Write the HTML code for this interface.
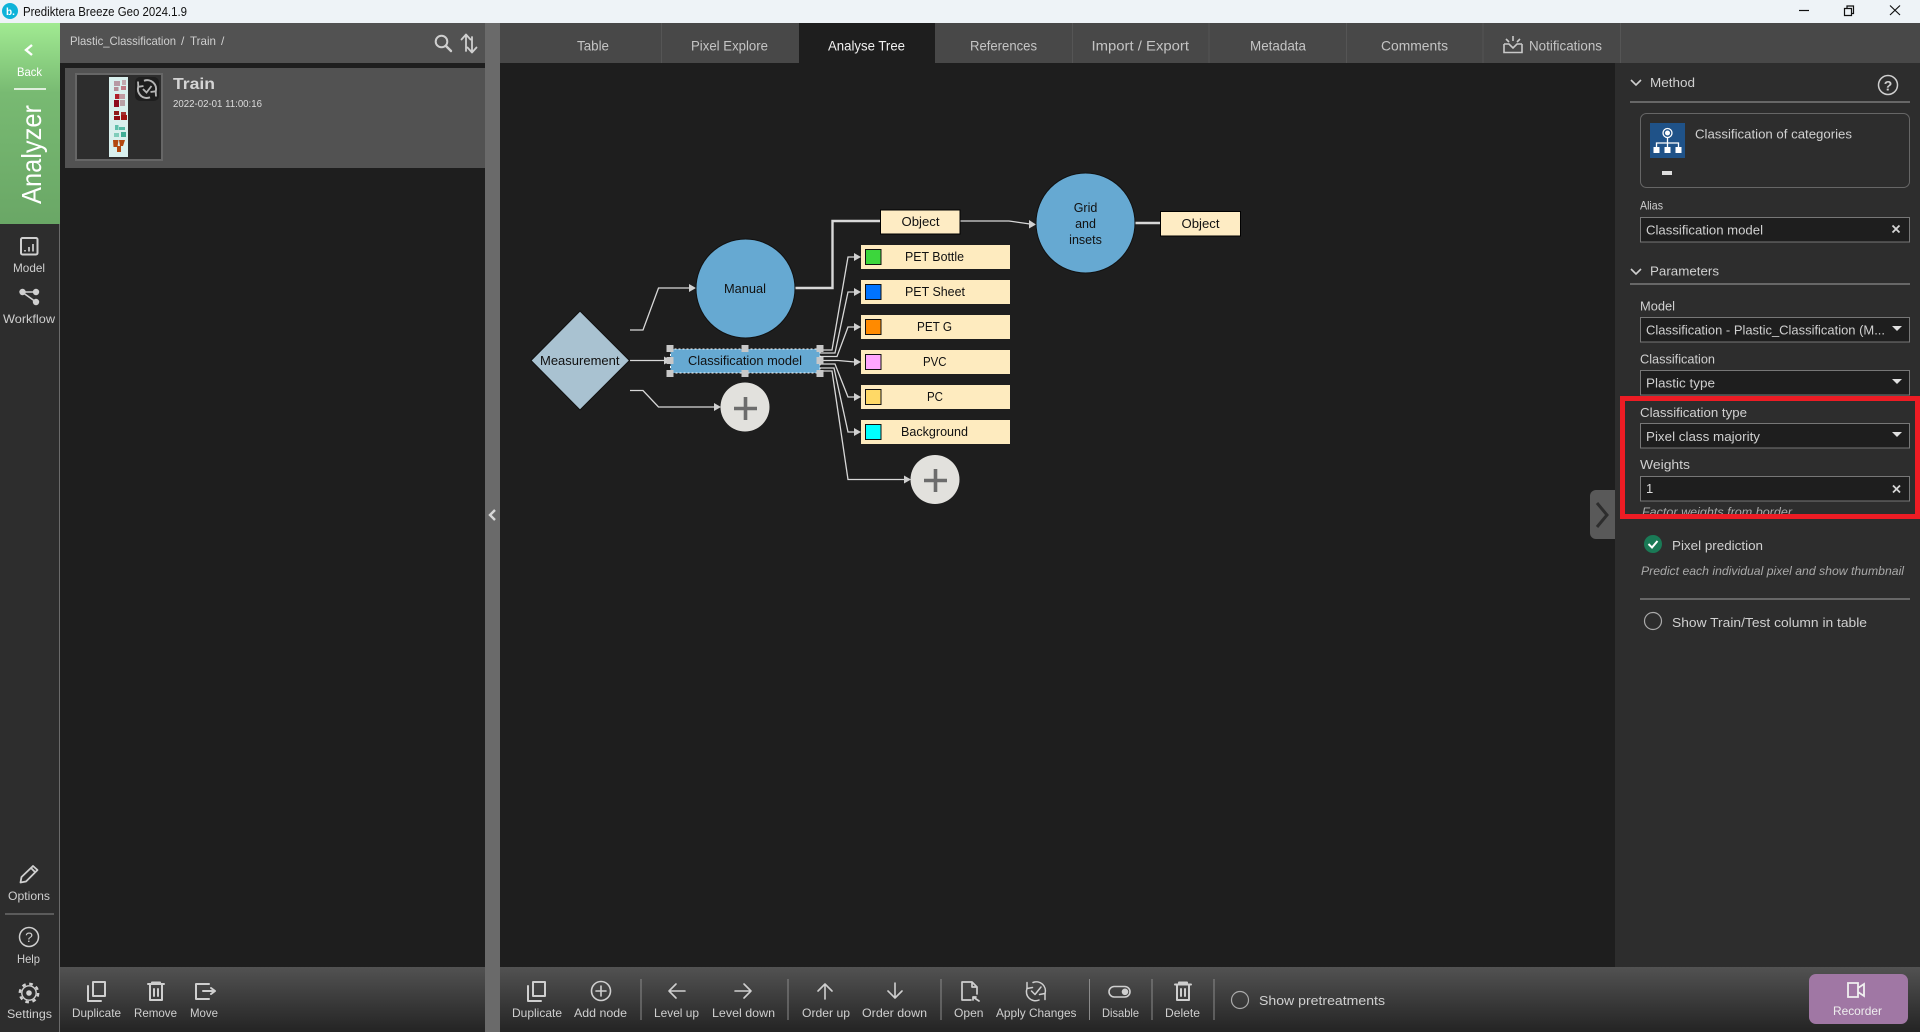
<!DOCTYPE html>
<html lang="en">
<head>
<meta charset="utf-8">
<title>Prediktera Breeze Geo 2024.1.9</title>
<style>
html,body{margin:0;padding:0;width:1920px;height:1032px;overflow:hidden;background:#1e1e1e}
.p{position:absolute}
svg{position:absolute;left:0;top:0}
text{font-family:"Liberation Sans",sans-serif;font-size:12px;fill:#cfcfcf}
.w{font-size:13px;fill:#d0d0d0}
.tab{font-size:14px;fill:#c4c4c4}
.n{font-size:12.5px;fill:#111}
.i{fill:none;stroke:#cfcfcf;stroke-width:2;stroke-linejoin:round;stroke-linecap:round}
.e{fill:none;stroke:#d8d8d8;stroke-width:1.3}
.a{fill:#d0d0d0;stroke:none}
</style>
</head>
<body>
<div class="p" style="left:0;top:0;width:1920px;height:23px;background:#eef3f7"></div>
<div class="p" style="left:0;top:23px;width:59px;height:1009px;background:#2d2d2d;border-right:1px solid #6a6a6a"></div>
<div class="p" style="left:0;top:23px;width:60px;height:201px;background:linear-gradient(#a1ea92,#78ba72 35%,#6aa766)"></div>
<div class="p" style="left:60px;top:23px;width:425px;height:40px;background:#525252"></div>
<div class="p" style="left:65px;top:68px;width:420px;height:100px;background:#525252"></div>
<div class="p" style="left:75px;top:73px;width:84px;height:84px;border:2px solid #666;background:#2d2d2d"></div>
<div class="p" style="left:485px;top:23px;width:15px;height:1009px;background:#6a6a6a"></div>
<div class="p" style="left:500px;top:23px;width:1420px;height:40px;background:#484848"></div>
<div class="p" style="left:799px;top:23px;width:136px;height:40px;background:#1e1e1e"></div>
<div class="p" style="left:1615px;top:63px;width:305px;height:904px;background:#2d2d2d"></div>
<div class="p" style="left:60px;top:967px;width:425px;height:65px;background:linear-gradient(#525252,#242424)"></div>
<div class="p" style="left:500px;top:967px;width:1420px;height:65px;background:linear-gradient(#525252,#242424)"></div>
<div class="p" style="left:1809px;top:974px;width:99px;height:50px;border-radius:7px;background:#a077a4"></div>
<div class="p" style="left:1590px;top:490px;width:25px;height:49px;border-radius:6px 0 0 6px;background:#595959"></div>

<svg width="1920" height="1032" viewBox="0 0 1920 1032" xmlns="http://www.w3.org/2000/svg">
<!-- title bar -->
<circle cx="10" cy="11" r="8" fill="#0eb3d9"/>
<text x="6" y="15" style="font-size:10px;font-weight:bold;fill:#fff">b.</text>
<text x="23" y="16" textLength="164" lengthAdjust="spacingAndGlyphs" style="fill:#111;font-size:12.5px">Prediktera Breeze Geo 2024.1.9</text>
<path d="M1799 10.500H1809" stroke="#111" stroke-width="1.200"/>
<path d="M1844.500 8.500h7v7h-7zM1847 8.500V6h6.500v7.500H1851.500" fill="none" stroke="#111" stroke-width="1.200"/>
<path d="M1890 5.500L1900 15M1900 5.500L1890 15" stroke="#111" stroke-width="1.200"/>

<!-- left rail -->
<path d="M32 45L26 50L32 55" fill="none" stroke="#fff" stroke-width="2.400"/>
<text x="17" y="76" textLength="25" lengthAdjust="spacingAndGlyphs" style="fill:#fff">Back</text>
<path d="M14 89H46" stroke="#fff" stroke-width="1.500"/>
<text transform="translate(41,204) rotate(-90)" textLength="99" lengthAdjust="spacingAndGlyphs" style="font-size:28px;fill:#fff">Analyzer</text>
<rect x="21" y="238" width="16.500" height="16.500" rx="1.500" class="i"/>
<path d="M25 250v1.500M29 247v4.500M33 244v7.500" class="i" style="stroke-width:1.700;stroke-linecap:butt"/>
<text x="13" y="272" textLength="32" lengthAdjust="spacingAndGlyphs">Model</text>
<path d="M22 292H36M22 292L36 302" stroke="#cfcfcf" stroke-width="1.600"/>
<circle cx="22.500" cy="292" r="3.200" fill="#cfcfcf"/><circle cx="36" cy="292" r="3.200" fill="#cfcfcf"/><circle cx="36" cy="302" r="3.200" fill="#cfcfcf"/>
<text x="3" y="323" textLength="52" lengthAdjust="spacingAndGlyphs">Workflow</text>
<path d="M20.500 882.500L21.500 877L33 866L37.500 870L26 881.500ZM31 868L35 872" class="i" style="stroke-width:1.800"/>
<text x="8" y="900" textLength="42" lengthAdjust="spacingAndGlyphs">Options</text>
<path d="M5 914H54" stroke="#777" stroke-width="1.200"/>
<circle cx="29" cy="937" r="9.500" class="i" style="stroke-width:1.500"/>
<text x="29" y="942" text-anchor="middle" style="font-size:14px">?</text>
<text x="17" y="963" textLength="23" lengthAdjust="spacingAndGlyphs">Help</text>
<circle cx="29" cy="993" r="9.200" fill="none" stroke="#cfcfcf" stroke-width="2.400" stroke-dasharray="3.610 3.610"/>
<circle cx="29" cy="993" r="7.200" fill="none" stroke="#cfcfcf" stroke-width="1.400"/>
<circle cx="29" cy="993" r="2.800" fill="#cfcfcf"/>
<text x="7" y="1018" textLength="45" lengthAdjust="spacingAndGlyphs">Settings</text>

<!-- list header -->
<text x="70" y="45" textLength="106" lengthAdjust="spacingAndGlyphs">Plastic_Classification</text>
<text x="181" y="45" style="font-size:12px">/</text>
<text x="190" y="45" textLength="26" lengthAdjust="spacingAndGlyphs">Train</text>
<text x="221" y="45">/</text>
<circle cx="441.500" cy="41.500" r="5.800" class="i"/>
<path d="M446 46L451 51" class="i" style="stroke-width:2.400"/>
<path d="M466 51V35M461.500 39.500L466 34.500L470.500 39.500M472 37V52M467.500 47.500L472 52.500L476.500 47.500" class="i" style="stroke-width:1.800"/>

<!-- thumbnail -->
<rect x="109" y="77" width="19" height="80" fill="#d9f0ee"/>
<g>
<rect x="114" y="81" width="6" height="5" fill="#b79aa4"/><rect x="122" y="80" width="4" height="5" fill="#c3a8ae"/>
<rect x="114" y="87" width="4.500" height="4" fill="#b58d96"/><rect x="121" y="86" width="5" height="4" fill="#c07a85"/>
<rect x="115" y="94" width="4.500" height="5" fill="#b0202a"/><rect x="120" y="94" width="5" height="5" fill="#c09aa2"/>
<rect x="114" y="100" width="5" height="7" fill="#8e0d20"/><rect x="120" y="100" width="5" height="6" fill="#b8a0a6"/>
<rect x="114" y="111" width="5" height="4" fill="#8f1a1a"/><rect x="121" y="112" width="5" height="3" fill="#a33030"/>
<rect x="114" y="116" width="6" height="4" fill="#8e0d14"/><rect x="121" y="115" width="6" height="5" fill="#a01414"/>
<rect x="115" y="125" width="3.500" height="5" fill="#5fbfab"/><rect x="119" y="127" width="6" height="3" fill="#55bba5"/>
<rect x="114" y="133" width="5" height="4" fill="#7fcdbb"/><rect x="121" y="132" width="5" height="5" fill="#3fae97"/>
<path d="M113 140h5.500l-1 7h-4zM119 140h6l-2 6h-3zM117 146h4v6h-4z" fill="#b2480f"/>
</g>
<rect x="135" y="77" width="24" height="24" rx="5" fill="#1e1e1e"/>
<path d="M144 80.800A8.800 8.800 0 0 1 155.700 91.500M150 97.300A8.800 8.800 0 0 1 138.300 86.500" fill="none" stroke="#b5b5b5" stroke-width="2"/>
<path d="M138 81.500L138.300 86.800L143.500 86M156 96.500L155.700 91.300L150.500 92" fill="none" stroke="#b5b5b5" stroke-width="1.800"/>
<path d="M143 89L146.500 92.500L151.500 86" fill="none" stroke="#b5b5b5" stroke-width="1.800"/>
<text x="173" y="89" textLength="42" lengthAdjust="spacingAndGlyphs" style="font-size:16px;font-weight:bold;fill:#d4d4d4">Train</text>
<text x="173" y="107" textLength="89" lengthAdjust="spacingAndGlyphs" style="font-size:10px;fill:#dcdcdc">2022-02-01 11:00:16</text>
<path d="M495 510L490 515L495 520" fill="none" stroke="#d8d8d8" stroke-width="2.400"/>

<!-- tabs -->
<path d="M661.500 23V63M1072.500 23V63M1209 23V63M1346.500 23V63M1483 23V63M1620.500 23V63" stroke="#555" stroke-width="1"/>
<text class="tab" x="577" y="50.500" textLength="32" lengthAdjust="spacingAndGlyphs">Table</text>
<text class="tab" x="691" y="50.500" textLength="77" lengthAdjust="spacingAndGlyphs">Pixel Explore</text>
<text class="tab" x="828" y="50.500" textLength="77" lengthAdjust="spacingAndGlyphs" style="fill:#f0f0f0">Analyse Tree</text>
<text class="tab" x="970" y="50.500" textLength="67" lengthAdjust="spacingAndGlyphs">References</text>
<text class="tab" x="1091.500" y="50.500" textLength="97.500" lengthAdjust="spacingAndGlyphs">Import / Export</text>
<text class="tab" x="1250" y="50.500" textLength="56" lengthAdjust="spacingAndGlyphs">Metadata</text>
<text class="tab" x="1381" y="50.500" textLength="67" lengthAdjust="spacingAndGlyphs">Comments</text>
<text class="tab" x="1529" y="50.500" textLength="73" lengthAdjust="spacingAndGlyphs">Notifications</text>
<path d="M1504 44v8.500h18V44M1504 44l5 0 4 4 4-4 5 0M1513 36v5M1506 39l3 3M1520 39l-3 3" fill="none" stroke="#c9c9c9" stroke-width="1.600"/>

<!-- graph edges -->
<path class="e" d="M630 330H643L658.500 288H690"/>
<path class="a" d="M696 288L689 284V292Z"/>
<path class="e" d="M630 360.500H664"/><path class="a" d="M671 360.500L664 356.500V364.500Z"/>
<path class="e" d="M630 390.500H643L658.500 407H715"/><path class="a" d="M721 407L714 403V411Z"/>
<path d="M795 288H832.500V221H880.500" fill="none" stroke="#d8d8d8" stroke-width="2.400"/>
<path class="e" d="M960 221H1009L1030 224"/><path class="a" d="M1036 224.500L1029 220V228.500Z"/>
<path d="M1135 223H1161" fill="none" stroke="#d8d8d8" stroke-width="2.400"/>
<path class="e" d="M820 350H832L848 257H855"/><path class="a" d="M861 257L854 253V261Z"/>
<path class="e" d="M820 353H835L848 292H855"/><path class="a" d="M861 292L854 288V296Z"/>
<path class="e" d="M820 356.500H837L848 327H855"/><path class="a" d="M861 327L854 323V331Z"/>
<path class="e" d="M820 360.500H838L855 362"/><path class="a" d="M861 362L854 358V366Z"/>
<path class="e" d="M820 364H835L848 397H855"/><path class="a" d="M861 397L854 393V401Z"/>
<path class="e" d="M820 368H834L848 432H855"/><path class="a" d="M861 432L854 428V436Z"/>
<path class="e" d="M820 371H832L848 479.500H905"/><path class="a" d="M911 479.500L904 475.500V483.500Z"/>

<!-- graph nodes -->
<path d="M580 311L629.500 360.500L580 410L531 360.500Z" fill="#a9c2d1" stroke="#111" stroke-width="1"/>
<text class="n" x="540" y="365" textLength="79.500" lengthAdjust="spacingAndGlyphs">Measurement</text>
<ellipse cx="745.500" cy="288.500" rx="49.500" ry="49.500" fill="#66a9d2" stroke="#111" stroke-width="1"/>
<text class="n" x="724" y="293" textLength="42" lengthAdjust="spacingAndGlyphs">Manual</text>
<ellipse cx="1085.500" cy="223" rx="49.500" ry="50" fill="#66a9d2" stroke="#111" stroke-width="1"/>
<text class="n" x="1085.500" y="212" text-anchor="middle">Grid</text>
<text class="n" x="1085.500" y="228" text-anchor="middle">and</text>
<text class="n" x="1085.500" y="244" text-anchor="middle">insets</text>
<rect x="880.500" y="210" width="79.500" height="24" fill="#feecc4" stroke="#000"/>
<text class="n" x="901.500" y="226" textLength="38" lengthAdjust="spacingAndGlyphs">Object</text>
<rect x="1160.500" y="211.500" width="80" height="24.500" fill="#feecc4" stroke="#000"/>
<text class="n" x="1181.500" y="228" textLength="38" lengthAdjust="spacingAndGlyphs">Object</text>

<rect x="861" y="245" width="149" height="24" fill="#feebbf"/>
<rect x="861" y="280" width="149" height="24" fill="#feebbf"/>
<rect x="861" y="315" width="149" height="24" fill="#feebbf"/>
<rect x="861" y="350" width="149" height="24" fill="#feebbf"/>
<rect x="861" y="385" width="149" height="24" fill="#feebbf"/>
<rect x="861" y="420" width="149" height="24" fill="#feebbf"/>
<rect x="865.500" y="249.500" width="15.500" height="15" fill="#3cd63c" stroke="#111"/>
<rect x="865.500" y="284.500" width="15.500" height="15" fill="#0073ff" stroke="#111"/>
<rect x="865.500" y="319.500" width="15.500" height="15" fill="#ff8a00" stroke="#111"/>
<rect x="865.500" y="354.500" width="15.500" height="15" fill="#ffa6ff" stroke="#111"/>
<rect x="865.500" y="389.500" width="15.500" height="15" fill="#ffd966" stroke="#111"/>
<rect x="865.500" y="424.500" width="15.500" height="15" fill="#00ffff" stroke="#111"/>
<text class="n" x="905" y="261" textLength="59" lengthAdjust="spacingAndGlyphs">PET Bottle</text>
<text class="n" x="905" y="296" textLength="60" lengthAdjust="spacingAndGlyphs">PET Sheet</text>
<text class="n" x="917" y="331" textLength="35" lengthAdjust="spacingAndGlyphs">PET G</text>
<text class="n" x="923" y="366" textLength="23.500" lengthAdjust="spacingAndGlyphs">PVC</text>
<text class="n" x="927" y="401" textLength="16" lengthAdjust="spacingAndGlyphs">PC</text>
<text class="n" x="901" y="436" textLength="67" lengthAdjust="spacingAndGlyphs">Background</text>

<rect x="670.500" y="349" width="149.500" height="24" fill="#66a9d2" stroke="#fff" stroke-width="1" stroke-dasharray="2 2"/>
<text class="n" x="688" y="365" textLength="114" lengthAdjust="spacingAndGlyphs">Classification model</text>
<g fill="#c8c8c8">
<rect x="666.500" y="345" width="7" height="7"/><rect x="741.500" y="345" width="7" height="7"/><rect x="816.500" y="345" width="7" height="7"/>
<rect x="666.500" y="357" width="7" height="7"/><rect x="816.500" y="357" width="7" height="7"/>
<rect x="666.500" y="370" width="7" height="7"/><rect x="741.500" y="370" width="7" height="7"/><rect x="816.500" y="370" width="7" height="7"/>
</g>
<circle cx="745" cy="407" r="24.500" fill="#e2e1dd"/>
<path d="M734 408.500H757M745.500 397V420" stroke="#6c6c6c" stroke-width="3.600"/>
<circle cx="935" cy="479.500" r="24.500" fill="#e2e1dd"/>
<path d="M924 480.500H947M935.500 469V492" stroke="#6c6c6c" stroke-width="3.600"/>

<!-- right panel -->
<path d="M1631 80L1636 85L1641 80" fill="none" stroke="#cfcfcf" stroke-width="1.600"/>
<text class="w" x="1650" y="87" textLength="45" lengthAdjust="spacingAndGlyphs">Method</text>
<circle cx="1888" cy="85" r="9.500" class="i" style="stroke-width:1.500"/>
<text x="1888" y="90.500" text-anchor="middle" style="font-size:14px;font-weight:bold">?</text>
<path d="M1630 102H1910" stroke="#8a8a8a" stroke-width="1.300"/>
<rect x="1640.500" y="113.500" width="269" height="74" rx="6" fill="none" stroke="#666"/>
<rect x="1650" y="123" width="35" height="35" fill="#1f5288"/>
<circle cx="1667.500" cy="133" r="4.500" fill="none" stroke="#fff" stroke-width="1.300"/><circle cx="1667.500" cy="133" r="2.500" fill="#fff"/>
<path d="M1667.500 138V143M1656.500 147V143H1678.500V147M1667.500 143V147" fill="none" stroke="#fff" stroke-width="1.300"/>
<rect x="1653.500" y="147" width="6" height="6" fill="#fff"/><rect x="1664.500" y="147" width="6" height="6" fill="#fff"/><rect x="1675.500" y="147" width="6" height="6" fill="#fff"/>
<text class="w" x="1695" y="138.500" textLength="157" lengthAdjust="spacingAndGlyphs">Classification of categories</text>
<rect x="1662" y="171" width="10" height="4" fill="#ddd"/>
<text x="1640" y="209.500" textLength="23" lengthAdjust="spacingAndGlyphs">Alias</text>
<rect x="1640.500" y="217.500" width="269" height="24.500" fill="#1e1e1e" stroke="#777"/>
<text class="w" x="1646" y="234.500" textLength="117" lengthAdjust="spacingAndGlyphs">Classification model</text>
<path d="M1892.500 225.500L1899.500 232.500M1899.500 225.500L1892.500 232.500" stroke="#d5d5d5" stroke-width="1.800"/>
<path d="M1631 269L1636 274L1641 269" fill="none" stroke="#cfcfcf" stroke-width="1.600"/>
<text class="w" x="1650" y="275.500" textLength="69" lengthAdjust="spacingAndGlyphs">Parameters</text>
<path d="M1630 284H1910" stroke="#8a8a8a" stroke-width="1.300"/>
<text class="w" x="1640" y="310.500" textLength="35" lengthAdjust="spacingAndGlyphs">Model</text>
<rect x="1640.500" y="317.500" width="269" height="24.500" fill="#1e1e1e" stroke="#777"/>
<text class="w" x="1646" y="334.500" textLength="239" lengthAdjust="spacingAndGlyphs">Classification - Plastic_Classification (M...</text>
<path d="M1892 326H1902L1897 331Z" fill="#e0e0e0"/>
<text class="w" x="1640" y="363.500" textLength="75" lengthAdjust="spacingAndGlyphs">Classification</text>
<rect x="1640.500" y="370.500" width="269" height="24.500" fill="#1e1e1e" stroke="#777"/>
<text class="w" x="1646" y="387.500" textLength="69" lengthAdjust="spacingAndGlyphs">Plastic type</text>
<path d="M1892 379H1902L1897 384Z" fill="#e0e0e0"/>
<text class="w" x="1640" y="417" textLength="107" lengthAdjust="spacingAndGlyphs">Classification type</text>
<rect x="1640.500" y="423.500" width="269" height="24.500" fill="#1e1e1e" stroke="#777"/>
<text class="w" x="1646" y="441" textLength="114" lengthAdjust="spacingAndGlyphs">Pixel class majority</text>
<path d="M1892 432H1902L1897 437Z" fill="#e0e0e0"/>
<text class="w" x="1640" y="469" textLength="50" lengthAdjust="spacingAndGlyphs">Weights</text>
<rect x="1640.500" y="476.500" width="269" height="24.500" fill="#1e1e1e" stroke="#777"/>
<text class="w" x="1646" y="493" style="fill:#ddd">1</text>
<path d="M1893 485.500L1900 492.500M1900 485.500L1893 492.500" stroke="#d5d5d5" stroke-width="1.800"/>
<text x="1642" y="516" textLength="150" lengthAdjust="spacingAndGlyphs" style="font-style:italic;fill:#aaa">Factor weights from border</text>
<rect x="1622.500" y="398.500" width="295" height="118" fill="none" stroke="#ed1c24" stroke-width="5"/>
<path d="M1597 503L1607 515L1597 527" fill="none" stroke="#2d2d2d" stroke-width="3"/>
<circle cx="1653" cy="544" r="9" fill="#1a7a56"/>
<path d="M1648.500 544L1652 547.500L1657.500 541" fill="none" stroke="#fff" stroke-width="2"/>
<text class="w" x="1672" y="550" textLength="91" lengthAdjust="spacingAndGlyphs">Pixel prediction</text>
<text x="1641" y="575" textLength="263" lengthAdjust="spacingAndGlyphs" style="font-style:italic;fill:#aaa">Predict each individual pixel and show thumbnail</text>
<path d="M1640 599H1910" stroke="#8a8a8a" stroke-width="1.300"/>
<circle cx="1653" cy="621" r="8.500" fill="none" stroke="#aaa" stroke-width="1.200"/>
<text class="w" x="1672" y="627" textLength="195" lengthAdjust="spacingAndGlyphs">Show Train/Test column in table</text>

<!-- left toolbar -->
<path d="M93 982h12v14h-12zM88 986v15h13" class="i"/>
<text x="72" y="1017" textLength="49" lengthAdjust="spacingAndGlyphs">Duplicate</text>
<path d="M148 984H164M152 984V982.500H160V984M150 985V1000H162V985M154 989V996M158 989V996" class="i"/>
<text x="134" y="1017" textLength="43" lengthAdjust="spacingAndGlyphs">Remove</text>
<path d="M209 984H196V999H209M203 991H214M211 988L215 991L211 994" class="i"/>
<text x="190" y="1017" textLength="28" lengthAdjust="spacingAndGlyphs">Move</text>

<!-- main toolbar -->
<path d="M533 982h12v14h-12zM528 986v15h13" class="i"/>
<text x="512" y="1017" textLength="50" lengthAdjust="spacingAndGlyphs">Duplicate</text>
<circle cx="601" cy="991" r="9.500" class="i" style="stroke-width:1.600"/><path d="M601 986V996M596 991H606" class="i" style="stroke-width:1.600"/>
<text x="574" y="1017" textLength="53" lengthAdjust="spacingAndGlyphs">Add node</text>
<path d="M641 979V1020M788 979V1020M941 979V1020M1089.500 979V1020M1152 979V1020M1214 979V1020" stroke="#8a8a8a" stroke-width="1"/>
<path d="M685 991H669M676 984L669 991L676 998" class="i" style="stroke-width:1.600"/>
<text x="654" y="1017" textLength="45" lengthAdjust="spacingAndGlyphs">Level up</text>
<path d="M735 991H751M744 984L751 991L744 998" class="i" style="stroke-width:1.600"/>
<text x="712" y="1017" textLength="63" lengthAdjust="spacingAndGlyphs">Level down</text>
<path d="M825 999V984M818 991L825 984L832 991" class="i" style="stroke-width:1.600"/>
<text x="802" y="1017" textLength="48" lengthAdjust="spacingAndGlyphs">Order up</text>
<path d="M895 983V998M888 991L895 998L902 991" class="i" style="stroke-width:1.600"/>
<text x="862" y="1017" textLength="65" lengthAdjust="spacingAndGlyphs">Order down</text>
<path d="M971 1000H962V982H972L977 987V994M972 982V987H977M973 997L979 1001M973 997V1000M973 997H976" class="i" style="stroke-width:1.700"/>
<text x="954" y="1017" textLength="29.500" lengthAdjust="spacingAndGlyphs">Open</text>
<path d="M1033 982.500A9 9 0 0 1 1045 993.500M1039 1000A9 9 0 0 1 1027 988.500" class="i" style="stroke-width:1.500"/>
<path d="M1027 982.500L1027 988.500L1032.500 987.500M1045 999.500L1045 993.500L1039.500 994.500M1031.500 991L1035 994.500L1041 987" class="i" style="stroke-width:1.500"/>
<text x="996" y="1017" textLength="80.500" lengthAdjust="spacingAndGlyphs">Apply Changes</text>
<rect x="1109" y="986.500" width="21" height="10.500" rx="5.200" class="i" style="stroke-width:1.600"/><circle cx="1125" cy="991.800" r="3.300" fill="#cfcfcf"/>
<text x="1102" y="1017" textLength="37" lengthAdjust="spacingAndGlyphs">Disable</text>
<path d="M1175 984.500H1191M1179 984V982.500H1187V984M1177 985V1000H1189V985M1181 989V996M1185 989V996" class="i"/>
<text x="1165" y="1017" textLength="35" lengthAdjust="spacingAndGlyphs">Delete</text>
<circle cx="1240" cy="1000" r="8.500" fill="none" stroke="#aaa" stroke-width="1.200"/>
<text class="w" x="1259" y="1005" textLength="126" lengthAdjust="spacingAndGlyphs">Show pretreatments</text>
<path d="M1848 983h10v14h-10zM1858 988L1864 984V996L1858 992" fill="none" stroke="#f0f0f0" stroke-width="1.800"/>
<text x="1833" y="1015" textLength="49" lengthAdjust="spacingAndGlyphs" style="fill:#eee">Recorder</text>
</svg>
</body>
</html>
